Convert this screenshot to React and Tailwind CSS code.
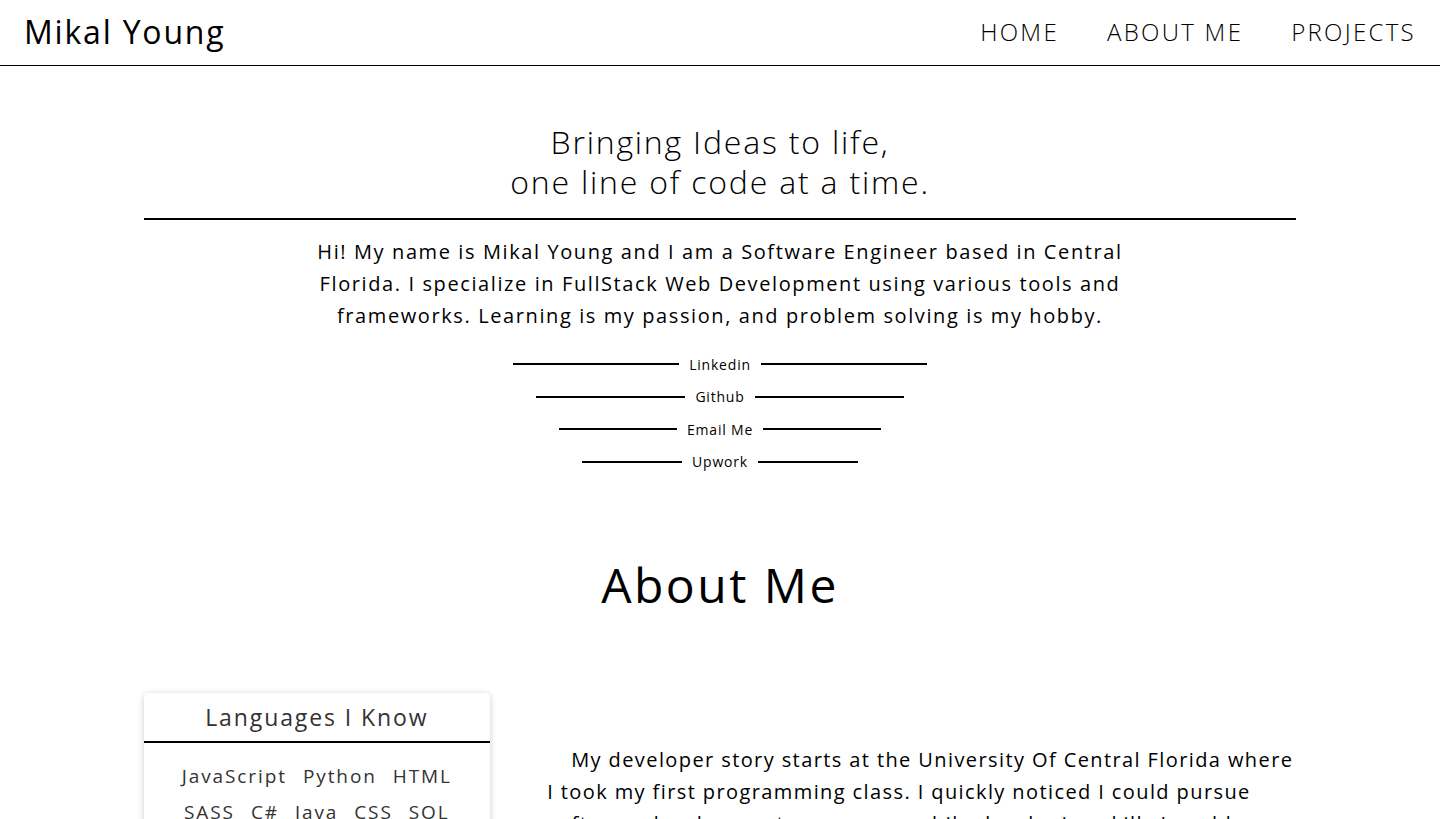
import React from "react";

const links = [
  { label: "Linkedin", width: "w-[414px]" },
  { label: "Github", width: "w-[368px]" },
  { label: "Email Me", width: "w-[322px]" },
  { label: "Upwork", width: "w-[276px]" },
];

const languages = ["JavaScript", "Python", "HTML", "SASS", "C#", "Java", "CSS", "SQL", "React", "Node"];

const App = () => {
  return (
    <div className="min-h-screen bg-white text-black font-['Open_Sans',sans-serif]">
      {/* Nav */}
      <header className="h-[66px] border-b border-black flex items-center justify-between px-6">
        <h1 className="text-[32px] tracking-[1.8px] -mt-[2px]">Mikal Young</h1>
        <nav className="flex gap-12 text-[24px] font-light tracking-[2.3px] -mt-[2px]">
          <a href="#">HOME</a>
          <a href="#">ABOUT ME</a>
          <a href="#">PROJECTS</a>
        </nav>
      </header>

      {/* Hero */}
      <section className="w-[80%] mx-auto pt-[56px] text-center">
        <h2 className="text-[32px] leading-[40px] font-light tracking-[1.8px] pb-4 border-b-2 border-black">
          Bringing Ideas to life,
          <br />
          one line of code at a time.
        </h2>
        <p className="mt-[16px] max-w-[900px] mx-auto text-[20px] leading-[32px] font-medium tracking-[1.6px]">
          Hi! My name is Mikal Young and I am a Software Engineer based in Central
          <br />
          Florida. I specialize in FullStack Web Development using various tools and
          <br />
          frameworks. Learning is my passion, and problem solving is my hobby.
        </p>
        <div className="mt-[16px] flex flex-col items-center">
          {links.map((l) => (
            <a key={l.label} href="#" className={`${l.width} h-[32.5px] flex items-center`}>
              <span className="flex-1 h-[2px] bg-black" />
              <span className="px-[10px] text-[14px] tracking-[0.8px]">{l.label}</span>
              <span className="flex-1 h-[2px] bg-black" />
            </a>
          ))}
        </div>
      </section>

      {/* About */}
      <section className="w-[80%] mx-auto mt-[79px]">
        <h2 className="text-center text-[48px] leading-[56px] tracking-[2.5px]">About Me</h2>
        <div className="mt-[80px] flex justify-between items-start">
          <div className="w-[30%] bg-white rounded shadow-[0_1px_6px_rgba(0,0,0,0.2)] text-[#333]">
            <h3 className="text-center text-[23px] leading-[48px] tracking-[1.9px] border-b-2 border-black">
              Languages I Know
            </h3>
            <ul className="px-6 pt-[15px] pb-5 flex flex-wrap justify-center gap-x-4 text-[19px] leading-[36px] font-medium tracking-[1.9px]">
              {languages.map((lang) => (
                <li key={lang}>{lang}</li>
              ))}
            </ul>
          </div>
          <div className="w-[65%] mt-[51px] text-[20px] leading-[32px] font-medium tracking-[1.4px]">
            <p className="indent-6">
              My developer story starts at the University Of Central Florida where
              I took my first programming class. I quickly noticed I could pursue
              software development as a career while developing skills I could use
              every day. Since then I have been building web applications, learning
              new tools and frameworks, and solving problems one line of code at a time.
            </p>
          </div>
        </div>
      </section>
    </div>
  );
};

export default App;
